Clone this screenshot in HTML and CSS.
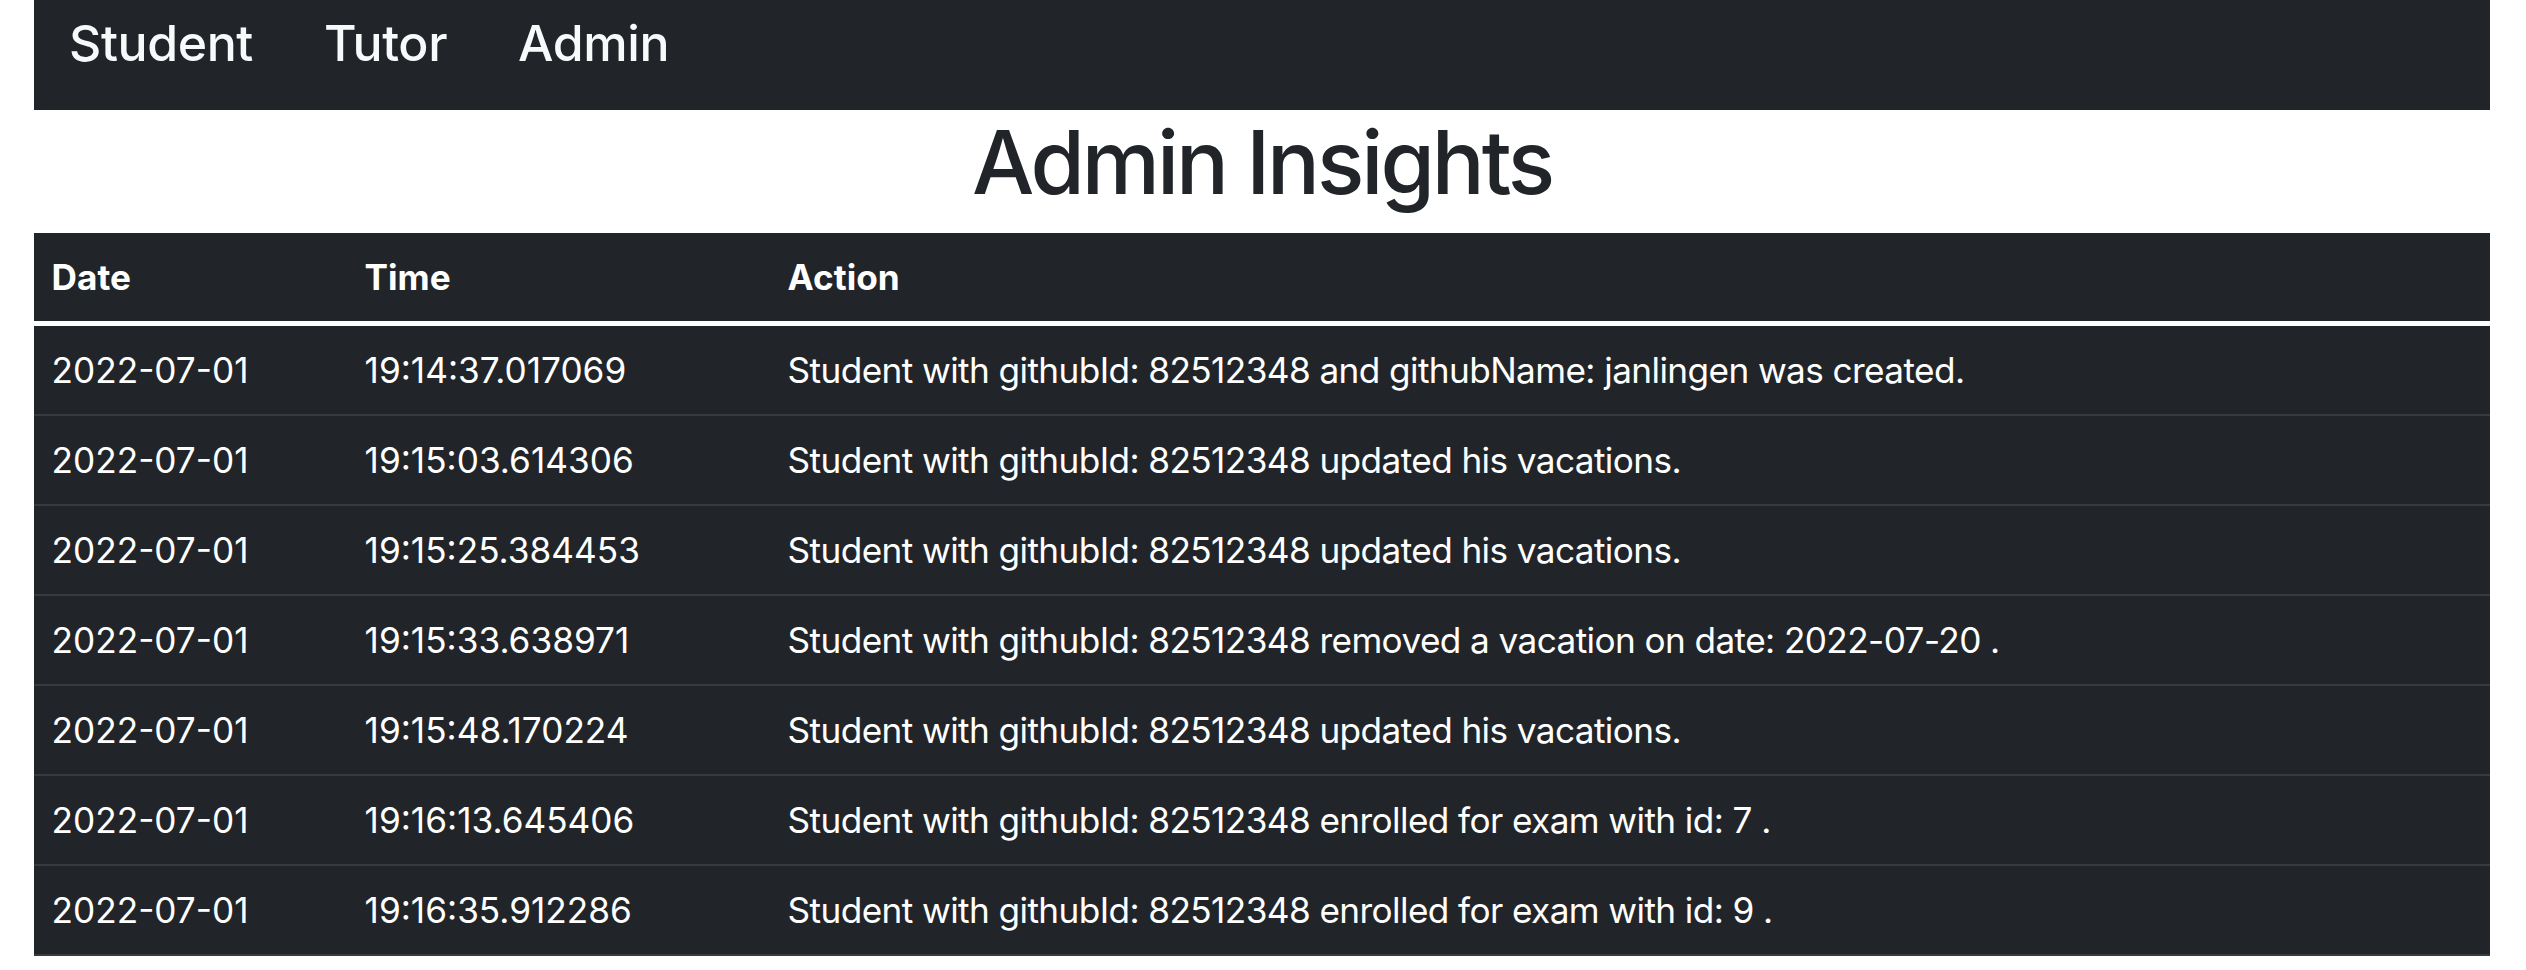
FILE: index.html
```html
<!DOCTYPE html>
<html lang="en">
<head>
<meta charset="utf-8">
<title>Admin Insights</title>
<link rel="stylesheet" href="styles.css">
</head>
<body>
<div class="page">
  <nav class="navbar">
    <a class="nav-link" href="#">Student</a>
    <a class="nav-link" href="#">Tutor</a>
    <a class="nav-link" href="#">Admin</a>
  </nav>
  <h1 class="title">Admin Insights</h1>
  <table class="log-table">
    <colgroup>
      <col class="col-date">
      <col class="col-time">
      <col class="col-action">
    </colgroup>
    <thead>
      <tr><th>Date</th><th>Time</th><th>Action</th></tr>
    </thead>
    <tbody>
      <tr><td>2022-07-01</td><td>19:14:37.017069</td><td class="action">Student with githubId: 82512348 and githubName: janlingen was created.</td></tr>
      <tr><td>2022-07-01</td><td>19:15:03.614306</td><td class="action">Student with githubId: 82512348 updated his vacations.</td></tr>
      <tr><td>2022-07-01</td><td>19:15:25.384453</td><td class="action">Student with githubId: 82512348 updated his vacations.</td></tr>
      <tr><td>2022-07-01</td><td>19:15:33.638971</td><td class="action">Student with githubId: 82512348 removed a vacation on date: 2022-07-20 .</td></tr>
      <tr><td>2022-07-01</td><td>19:15:48.170224</td><td class="action">Student with githubId: 82512348 updated his vacations.</td></tr>
      <tr><td>2022-07-01</td><td>19:16:13.645406</td><td class="action">Student with githubId: 82512348 enrolled for exam with id: 7 .</td></tr>
      <tr><td>2022-07-01</td><td>19:16:35.912286</td><td class="action">Student with githubId: 82512348 enrolled for exam with id: 9 .</td></tr>
    </tbody>
  </table>
</div>
</body>
</html>
```

FILE: styles.css
```css
html, body {
  margin: 0;
  padding: 0;
  background: #ffffff;
}

body {
  font-family: Inter, "Noto Sans", "Liberation Sans", sans-serif;
  color: #212529;
  font-size: 35.2px;
  line-height: 1.5;
}

.page {
  padding: 0 36px 0 34px;
}

.navbar {
  display: flex;
  align-items: flex-start;
  gap: 71px;
  height: 110px;
  box-sizing: border-box;
  padding: 10px 0 0 35px;
  background: #212529;
}

.nav-link {
  color: #f8f9fa;
  text-decoration: none;
  font-size: 50px;
  font-weight: 500;
  line-height: 66px;
  letter-spacing: -0.4px;
}

.title {
  margin: 0 0 17.6px;
  text-align: center;
  font-size: 88px;
  font-weight: 500;
  line-height: 105.6px;
  letter-spacing: -0.035em;
  color: #212529;
}

.log-table {
  width: 100%;
  border-collapse: collapse;
  table-layout: fixed;
  background: #212529;
  color: #ffffff;
}

.col-date { width: 313px; }
.col-time { width: 423px; }

.log-table th,
.log-table td {
  text-align: left;
  padding: 17.6px;
  line-height: 52.8px;
  white-space: nowrap;
}

.log-table th {
  font-weight: 700;
}

.log-table thead th {
  border-bottom: 5px solid #ffffff;
}

.log-table tbody td {
  border-bottom: 2px solid #373b3e;
}

.log-table .action {
  letter-spacing: -0.6px;
}
```
